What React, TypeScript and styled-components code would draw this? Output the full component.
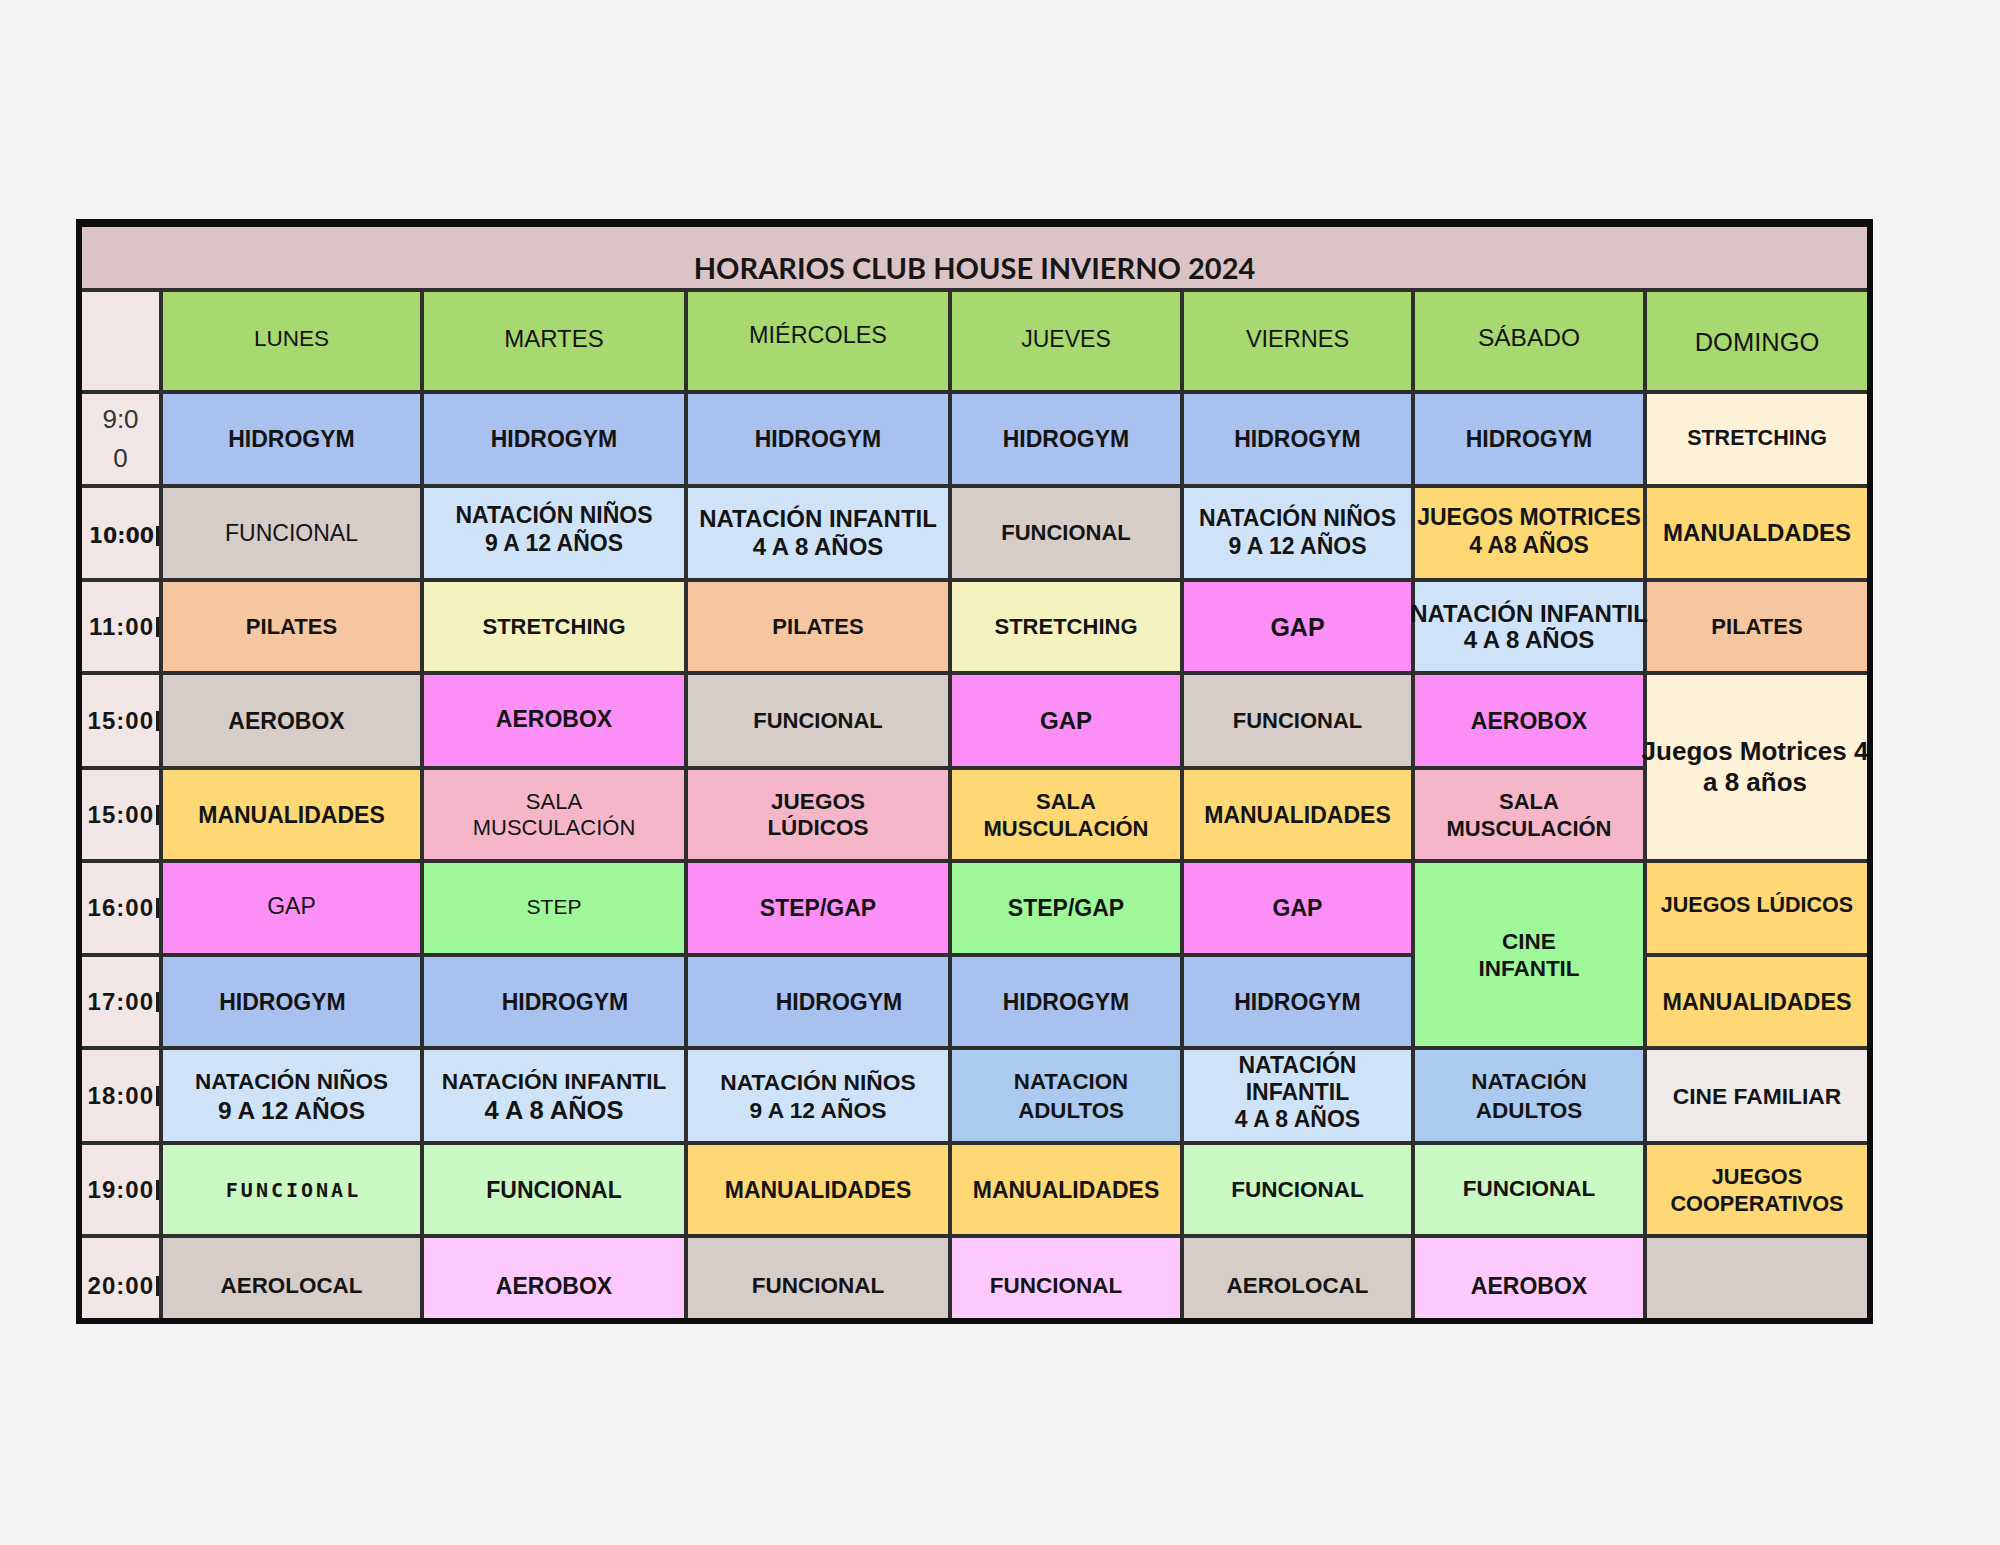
import React from "react";
import styled, { createGlobalStyle } from "styled-components";

const GlobalStyle = createGlobalStyle`
  html, body { margin: 0; padding: 0; background: #f3f4f6; }
  body { font-family: "Liberation Sans", Arial, sans-serif; }
`;

const C = {
  hydro: "#a9c1ef",
  nat: "#cfe3f8",
  natA: "#aacbef",
  grey: "#d6ccc8",
  peach: "#f6c6a0",
  pale: "#f4f3c0",
  mag: "#fb8ff5",
  yel: "#fdd874",
  pink: "#f5b6ca",
  green: "#9ef89a",
  cream: "#fdf1d8",
  lgreen: "#c9f8c3",
  lpink: "#fdc8fb",
  fam: "#efebe8",
  head: "#a8d870",
  time: "#f1e6e5",
  title: "#dcc4c6",
};

const Page = styled.div`
  width: 2000px;
  height: 1545px;
  box-sizing: border-box;
  padding: 219px 0 0 76px;
`;

const Board = styled.div`
  width: 1797px;
  box-sizing: border-box;
  border: 6px solid #0d0d0d;
  border-top-width: 8px;
  display: grid;
  grid-template-columns: 77px 257px 260px 260px 228px 227px 228px 220px;
  grid-template-rows: 61px 98px 90px 90px 89px 91px 89px 90px 89px 91px 89px 80px;
  gap: 4px;
  background: #2e2e2e;
`;

const Title = styled.div`
  grid-column: 1 / -1;
  background: ${C.title};
  display: flex;
  align-items: center;
  justify-content: center;
  padding-top: 20px;
  box-sizing: border-box;
  font-family: Lato, "Liberation Sans", sans-serif;
  font-weight: 700;
  font-size: 29px;
  line-height: 1;
  color: #161616;
`;

const Cell = styled.div<{ $bg: string; $span?: number }>`
  background: ${(p) => p.$bg};
  grid-row: span ${(p) => p.$span ?? 1};
  display: flex;
  align-items: center;
  justify-content: center;
  text-align: center;
  min-width: 0;
`;

const DayCell = styled(Cell)`
  color: #1b2a13;
`;

const TimeCell = styled.div<{ $wrap?: boolean }>`
  background: ${C.time};
  display: flex;
  align-items: center;
  justify-content: ${(p) => (p.$wrap ? "center" : "flex-end")};
  gap: 2px;
  color: #161616;
`;

const TimeText = styled.div<{ $family: string; $size: number; $weight: number; $ls: number; $dy: number }>`
  font-family: ${(p) => p.$family};
  font-size: ${(p) => p.$size}px;
  font-weight: ${(p) => p.$weight};
  letter-spacing: ${(p) => p.$ls}px;
  line-height: 1;
  white-space: nowrap;
  transform: translateY(${(p) => p.$dy}px);
`;

const WrapTime = styled.div`
  font-size: 26px;
  line-height: 39px;
  color: #333;
  text-align: center;
`;

const Tick = styled.span<{ $dy: number }>`
  display: block;
  width: 3px;
  height: 20px;
  background: #1a1a1a;
  transform: translateY(${(p) => p.$dy}px);
`;

const Label = styled.div<{
  $size: number;
  $weight: number;
  $lh: number;
  $dx: number;
  $dy: number;
  $family: string;
  $ls: number;
}>`
  font-family: ${(p) => p.$family};
  font-size: ${(p) => p.$size}px;
  font-weight: ${(p) => p.$weight};
  line-height: ${(p) => p.$lh}px;
  letter-spacing: ${(p) => p.$ls}px;
  color: #141414;
  white-space: nowrap;
  transform: translate(${(p) => p.$dx}px, ${(p) => p.$dy}px);
`;

const Line = styled.span<{ $size?: number }>`
  display: block;
  ${(p) => (p.$size ? `font-size: ${p.$size}px;` : "")}
`;

type Ln = string | { t: string; s: number };
type CellDef = {
  lines: Ln[];
  bg: string;
  s?: number;
  w?: number;
  lh?: number;
  dx?: number;
  dy?: number;
  span?: number;
  techno?: boolean;
};
type RowDef = { time: string; wrap?: boolean; dejavu?: boolean; dy?: number; cells: CellDef[] };

const days: { name: string; s: number; dy: number }[] = [
  { name: "LUNES", s: 22.5, dy: -2 },
  { name: "MARTES", s: 24, dy: -2 },
  { name: "MIÉRCOLES", s: 23.4, dy: -6 },
  { name: "JUEVES", s: 23, dy: -2 },
  { name: "VIERNES", s: 23.5, dy: -2 },
  { name: "SÁBADO", s: 24.5, dy: -3 },
  { name: "DOMINGO", s: 25.5, dy: 1 },
];

const H = (dx = 0): CellDef => ({ lines: ["HIDROGYM"], bg: C.hydro, dx });

const rows: RowDef[] = [
  {
    time: "9:0 0",
    wrap: true,
    cells: [H(), H(), H(), H(), H(), H(), { lines: ["STRETCHING"], bg: C.cream, s: 21.5, dy: -1 }],
  },
  {
    time: "10:00",
    dejavu: true,
    dy: 3,
    cells: [
      { lines: ["FUNCIONAL"], bg: C.grey, w: 400, dy: 0 },
      { lines: ["NATACIÓN NIÑOS", "9 A 12 AÑOS"], bg: C.nat, dy: -4 },
      { lines: ["NATACIÓN INFANTIL", "4 A 8 AÑOS"], bg: C.nat, s: 24, dy: 0 },
      { lines: ["FUNCIONAL"], bg: C.grey, s: 22 },
      { lines: ["NATACIÓN NIÑOS", "9 A 12 AÑOS"], bg: C.nat, dy: -1 },
      { lines: ["JUEGOS MOTRICES", "4 A8 AÑOS"], bg: C.yel, dy: -2 },
      { lines: ["MANUALDADES"], bg: C.yel, s: 24 },
    ],
  },
  {
    time: "11:00",
    cells: [
      { lines: ["PILATES"], bg: C.peach, s: 22 },
      { lines: ["STRETCHING"], bg: C.pale, s: 22 },
      { lines: ["PILATES"], bg: C.peach, s: 22 },
      { lines: ["STRETCHING"], bg: C.pale, s: 22 },
      { lines: ["GAP"], bg: C.mag, s: 25 },
      { lines: ["NATACIÓN INFANTIL", "4 A 8 AÑOS"], bg: C.nat, s: 24, lh: 26 },
      { lines: ["PILATES"], bg: C.peach, s: 22 },
    ],
  },
  {
    time: "15:00",
    cells: [
      { lines: ["AEROBOX"], bg: C.grey, dx: -5 },
      { lines: ["AEROBOX"], bg: C.mag, dy: -2 },
      { lines: ["FUNCIONAL"], bg: C.grey, s: 22 },
      { lines: ["GAP"], bg: C.mag, s: 24 },
      { lines: ["FUNCIONAL"], bg: C.grey, s: 22 },
      { lines: ["AEROBOX"], bg: C.mag },
      { lines: ["Juegos Motrices 4", "a 8 años"], bg: C.cream, s: 26, lh: 31, span: 2, dx: -2 },
    ],
  },
  {
    time: "15:00",
    cells: [
      { lines: ["MANUALIDADES"], bg: C.yel },
      { lines: ["SALA", "MUSCULACIÓN"], bg: C.pink, w: 400, s: 22, lh: 26 },
      { lines: ["JUEGOS", "LÚDICOS"], bg: C.pink, s: 22.5, lh: 26 },
      { lines: ["SALA", "MUSCULACIÓN"], bg: C.yel, s: 22, lh: 27 },
      { lines: ["MANUALIDADES"], bg: C.yel },
      { lines: ["SALA", "MUSCULACIÓN"], bg: C.pink, s: 22, lh: 27 },
    ],
  },
  {
    time: "16:00",
    cells: [
      { lines: ["GAP"], bg: C.mag, w: 400, dy: -2 },
      { lines: ["STEP"], bg: C.green, w: 400, s: 21, dy: -1 },
      { lines: ["STEP/GAP"], bg: C.mag },
      { lines: ["STEP/GAP"], bg: C.green },
      { lines: ["GAP"], bg: C.mag },
      { lines: ["CINE", "INFANTIL"], bg: C.green, s: 22.5, lh: 27, span: 2 },
      { lines: ["JUEGOS LÚDICOS"], bg: C.yel, s: 21.5, dy: -3 },
    ],
  },
  {
    time: "17:00",
    cells: [
      H(-9),
      H(11),
      H(21),
      H(),
      H(),
      { lines: ["MANUALIDADES"], bg: C.yel, s: 23.3 },
    ],
  },
  {
    time: "18:00",
    cells: [
      { lines: ["NATACIÓN NIÑOS", { t: "9 A 12 AÑOS", s: 24.5 }], bg: C.nat, s: 22.5, lh: 29 },
      { lines: ["NATACIÓN INFANTIL", { t: "4 A 8 AÑOS", s: 25.5 }], bg: C.nat, s: 22.7, lh: 29 },
      { lines: ["NATACIÓN NIÑOS", "9 A 12 AÑOS"], bg: C.nat, s: 22.8, lh: 28 },
      { lines: ["NATACION", "ADULTOS"], bg: C.natA, s: 22.3, lh: 29, dx: 5 },
      { lines: ["NATACIÓN", "INFANTIL", "4 A 8 AÑOS"], bg: C.nat, s: 23, lh: 27, dy: -3 },
      { lines: ["NATACIÓN", "ADULTOS"], bg: C.natA, s: 22.5, lh: 29 },
      { lines: ["CINE FAMILIAR"], bg: C.fam, s: 22.8 },
    ],
  },
  {
    time: "19:00",
    cells: [
      { lines: ["FUNCIONAL"], bg: C.lgreen, techno: true },
      { lines: ["FUNCIONAL"], bg: C.lgreen },
      { lines: ["MANUALIDADES"], bg: C.yel },
      { lines: ["MANUALIDADES"], bg: C.yel },
      { lines: ["FUNCIONAL"], bg: C.lgreen, s: 22.5 },
      { lines: ["FUNCIONAL"], bg: C.lgreen, s: 22.5, dy: -1 },
      { lines: ["JUEGOS", "COOPERATIVOS"], bg: C.yel, s: 21.7, lh: 27 },
    ],
  },
  {
    time: "20:00",
    dy: 8,
    cells: [
      { lines: ["AEROLOCAL"], bg: C.grey, s: 22.4, dy: 8 },
      { lines: ["AEROBOX"], bg: C.lpink, dy: 8 },
      { lines: ["FUNCIONAL"], bg: C.grey, s: 22.5, dy: 8 },
      { lines: ["FUNCIONAL"], bg: C.lpink, s: 22.5, dx: -10, dy: 8 },
      { lines: ["AEROLOCAL"], bg: C.grey, s: 22.4, dy: 8 },
      { lines: ["AEROBOX"], bg: C.lpink, dy: 8 },
      { lines: [], bg: C.grey },
    ],
  },
];

const lineText = (l: Ln) => (typeof l === "string" ? l : l.t);

const ActivityCell: React.FC<{ c: CellDef }> = ({ c }) => (
  <Cell $bg={c.bg} $span={c.span}>
    {c.lines.length > 0 && (
      <Label
        $size={c.techno ? 20 : c.s ?? 23}
        $weight={c.w ?? 700}
        $lh={c.lh ?? 28}
        $dx={(c.dx ?? 0) + (c.techno ? 2 : 0)}
        $dy={c.dy ?? 0}
        $family={c.techno ? '"DejaVu Sans Mono", monospace' : '"Liberation Sans", Arial, sans-serif'}
        $ls={c.techno ? 3 : 0}
      >
        {c.lines.map((l, i) => (
          <Line key={i} $size={typeof l === "string" ? undefined : l.s}>
            {lineText(l)}
          </Line>
        ))}
      </Label>
    )}
  </Cell>
);

const TimeLabel: React.FC<{ r: RowDef }> = ({ r }) => {
  if (r.wrap) {
    return (
      <TimeCell $wrap>
        <WrapTime>
          <Line>9:0</Line>
          <Line>0</Line>
        </WrapTime>
      </TimeCell>
    );
  }
  return (
    <TimeCell>
      <TimeText
        $family={r.dejavu ? '"DejaVu Sans", sans-serif' : '"Liberation Sans", Arial, sans-serif'}
        $size={r.dejavu ? 20.5 : 24}
        $weight={700}
        $ls={r.dejavu ? 0 : 1}
        $dy={r.dy ?? 0}
      >
        {r.time}
      </TimeText>
      <Tick $dy={r.dy ?? 0} />
    </TimeCell>
  );
};

export default function App() {
  return (
    <>
      <GlobalStyle />
      <Page>
        <Board>
          <Title>HORARIOS CLUB HOUSE INVIERNO 2024</Title>
          <TimeCell />
          {days.map((d) => (
            <DayCell key={d.name} $bg={C.head}>
              <Label $size={d.s} $weight={400} $lh={28} $dx={0} $dy={d.dy} $family='"Liberation Sans", Arial, sans-serif' $ls={0}>
                {d.name}
              </Label>
            </DayCell>
          ))}
          {rows.map((r, ri) => (
            <React.Fragment key={ri}>
              <TimeLabel r={r} />
              {r.cells.map((c, ci) => (
                <ActivityCell key={ci} c={c} />
              ))}
            </React.Fragment>
          ))}
        </Board>
      </Page>
    </>
  );
}
